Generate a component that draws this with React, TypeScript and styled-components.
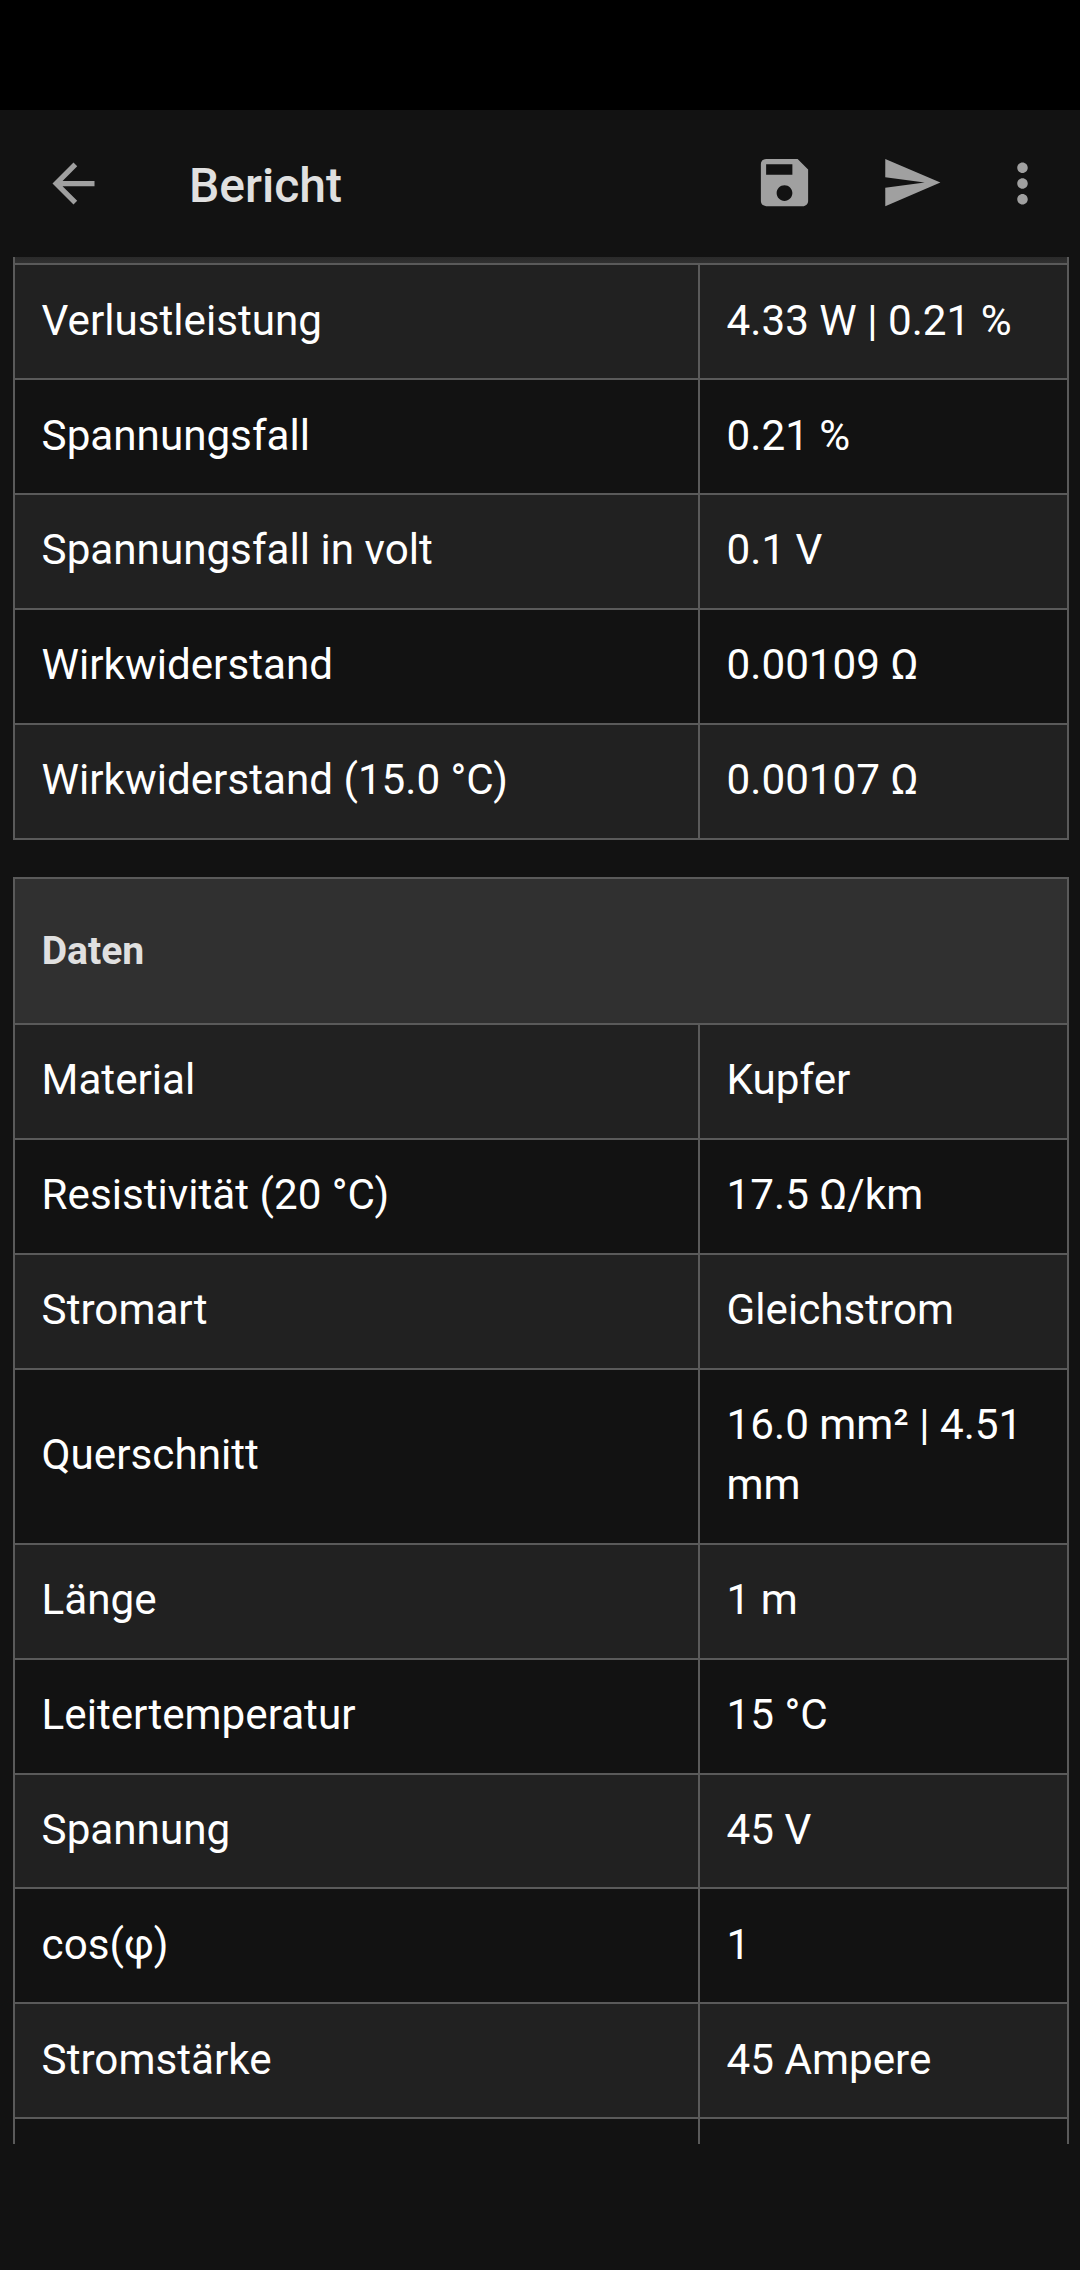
import React from "react";
import styled, { createGlobalStyle } from "styled-components";

const GlobalStyle = createGlobalStyle`
  * { box-sizing: border-box; }
  body { margin: 0; background: #121212; }
`;

const Screen = styled.div`
  width: 1080px;
  height: 2270px;
  display: flex;
  flex-direction: column;
  overflow: hidden;
  background: #121212;
  color: #fff;
  font-family: Roboto, "Noto Sans", sans-serif;
`;

const StatusBar = styled.div`
  flex: 0 0 110px;
  background: #000;
`;

const Toolbar = styled.header`
  flex: 0 0 147px;
  display: flex;
  align-items: center;
  padding: 0 26px 0 42px;
  color: #a0a0a0;
`;

const Title = styled.h1`
  flex: 1;
  margin: 0 0 0 84px;
  padding-top: 4px;
  font-size: 48px;
  font-weight: 500;
  line-height: 58px;
  color: #e0e0e0;
`;

const IconButton = styled.button<{ $gap?: number; $lift?: number }>`
  display: flex;
  margin: 0 0 0 ${(p) => p.$gap ?? 0}px;
  padding: 0 0 ${(p) => p.$lift ?? 0}px;
  border: 0;
  background: none;
  color: inherit;
`;

const Icon = styled.svg`
  display: block;
  width: 63px;
  height: 63px;
  fill: currentColor;
`;

const Report = styled.main`
  flex: 0 0 1887px;
  display: flex;
  flex-direction: column;
  gap: 37.1px;
  padding: 0 11px 0 13px;
  overflow: hidden;
`;

const Table = styled.section`
  flex: none;
  border: 2px solid #5a5a5a;
  &:first-child { border-top: 0; }
`;

const TableHead = styled.h2<{ $height: number; $underBar?: boolean }>`
  height: ${(p) => p.$height}px;
  margin: 0;
  padding: 0 26.7px;
  display: flex;
  align-items: center;
  background: ${(p) => (p.$underBar ? "linear-gradient(#2a2a2a, #303030)" : "#303030")};
  color: #e0e0e0;
  font-size: 39.1px;
  font-weight: 700;
`;

const Row = styled.div<{ $shaded: boolean }>`
  display: grid;
  grid-template-columns: 683px 1fr;
  min-height: 114.91px;
  border-top: 2px solid #5a5a5a;
  background: ${(p) => (p.$shaded ? "#212121" : "#121212")};
`;

const Cell = styled.div`
  display: flex;
  align-items: center;
  padding: 25.3px 26.6px 27.61px;
  font-size: 42.2px;
  line-height: 60px;
  & + & { border-left: 2px solid #5a5a5a; }
`;

const results = [
  ["Verlustleistung", "4.33 W | 0.21 %"],
  ["Spannungsfall", "0.21 %"],
  ["Spannungsfall in volt", "0.1 V"],
  ["Wirkwiderstand", "0.00109 Ω"],
  ["Wirkwiderstand (15.0 °C)", "0.00107 Ω"],
];

const data = [
  ["Material", "Kupfer"],
  ["Resistivität (20 °C)", "17.5 Ω/km"],
  ["Stromart", "Gleichstrom"],
  ["Querschnitt", "16.0 mm² | 4.51 mm"],
  ["Länge", "1 m"],
  ["Leitertemperatur", "15 °C"],
  ["Spannung", "45 V"],
  ["cos(φ)", "1"],
  ["Stromstärke", "45 Ampere"],
  ["", ""],
];

interface ReportTableProps {
  title?: string;
  headHeight: number;
  rows: string[][];
}

function ReportTable({ title, headHeight, rows }: ReportTableProps) {
  return (
    <Table>
      <TableHead $height={headHeight} $underBar={!title}>{title}</TableHead>
      {rows.map(([label, value], i) => (
        <Row key={i} $shaded={i % 2 === 0}>
          <Cell>{label}</Cell>
          <Cell>{value}</Cell>
        </Row>
      ))}
    </Table>
  );
}

export default function App() {
  return (
    <Screen>
      <GlobalStyle />
      <StatusBar />
      <Toolbar>
        <IconButton aria-label="Zurück">
          <Icon viewBox="0 0 24 24">
            <path d="M20 11H7.83l5.59-5.59L12 4l-8 8 8 8 1.41-1.41L7.83 13H20v-2z" />
          </Icon>
        </IconButton>
        <Title>Bericht</Title>
        <IconButton aria-label="Speichern" $lift={2}>
          <Icon viewBox="0 0 24 24">
            <path d="M17 3H5c-1.11 0-2 .9-2 2v14c0 1.1.89 2 2 2h14c1.1 0 2-.9 2-2V7l-4-4zm-5 16c-1.66 0-3-1.34-3-3s1.34-3 3-3 3 1.34 3 3-1.34 3-3 3zm3-10H5V5h10v4z" />
          </Icon>
        </IconButton>
        <IconButton aria-label="Senden" $gap={64} $lift={2}>
          <Icon viewBox="0 0 24 24">
            <path d="M2.01 21L23 12 2.01 3 2 10l15 2-15 2z" />
          </Icon>
        </IconButton>
        <IconButton aria-label="Mehr" $gap={48}>
          <Icon viewBox="0 0 24 24">
            <path d="M12 8c1.1 0 2-.9 2-2s-.9-2-2-2-2 .9-2 2 .9 2 2 2zm0 2c-1.1 0-2 .9-2 2s.9 2 2 2 2-.9 2-2-.9-2-2-2zm0 6c-1.1 0-2 .9-2 2s.9 2 2 2 2-.9 2-2-.9-2-2-2z" />
          </Icon>
        </IconButton>
      </Toolbar>
      <Report>
        <ReportTable headHeight={6.35} rows={results} />
        <ReportTable title="Daten" headHeight={144.15} rows={data} />
      </Report>
    </Screen>
  );
}
